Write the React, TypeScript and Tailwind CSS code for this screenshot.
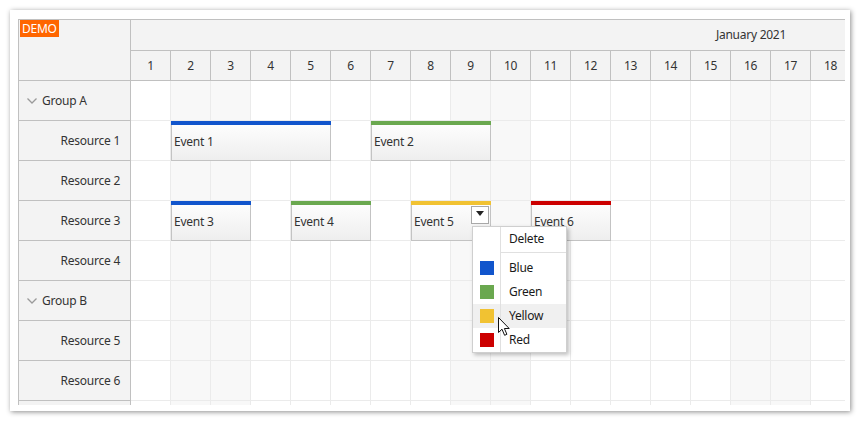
const days = Array.from({ length: 18 }, (_, i) => i + 1);
const weekend = new Set([2, 3, 9, 10, 16, 17]);

type Row = { name: string; group?: boolean };
const rows: Row[] = [
  { name: "Group A", group: true },
  { name: "Resource 1" },
  { name: "Resource 2" },
  { name: "Resource 3" },
  { name: "Resource 4" },
  { name: "Group B", group: true },
  { name: "Resource 5" },
  { name: "Resource 6" },
  { name: "" },
];

type Ev = { text: string; row: string; start: number; span: number; color: string; active?: boolean };
const events: Ev[] = [
  { text: "Event 1", row: "Resource 1", start: 2, span: 4, color: "#1155cc" },
  { text: "Event 2", row: "Resource 1", start: 7, span: 3, color: "#6aa84f" },
  { text: "Event 3", row: "Resource 3", start: 2, span: 2, color: "#1155cc" },
  { text: "Event 4", row: "Resource 3", start: 5, span: 2, color: "#6aa84f" },
  { text: "Event 5", row: "Resource 3", start: 8, span: 2, color: "#f1c232", active: true },
  { text: "Event 6", row: "Resource 3", start: 11, span: 2, color: "#cc0000" },
];

const colors = [
  { name: "Blue", color: "#1155cc" },
  { name: "Green", color: "#6aa84f" },
  { name: "Yellow", color: "#f1c232", hover: true },
  { name: "Red", color: "#cc0000" },
];

function Chevron() {
  return (
    <svg width="10" height="6" viewBox="0 0 10 6" className="shrink-0">
      <polyline points="0.5,0.5 5,5 9.5,0.5" fill="none" stroke="#9a9a9a" strokeWidth="1.3" />
    </svg>
  );
}

function EventBox({ ev }: { ev: Ev }) {
  return (
    <div
      className="absolute top-0 h-[40px] flex flex-col border-x border-b border-[#c3c3c3] bg-gradient-to-b from-white to-[#eeeeee]"
      style={{ left: (ev.start - 1) * 40, width: ev.span * 40 }}
    >
      <div className="h-[4px] -mx-px shrink-0" style={{ background: ev.color }} />
      <div className="flex-1 flex items-center pl-[2px] pb-[1px] text-[#333]">{ev.text}</div>
      {ev.active && (
        <div className="absolute right-[1px] top-[5px] w-[18px] h-[18px] bg-white border border-[#a9a9a9] flex justify-center pt-[4px]">
          <div className="w-0 h-0 border-l-[4px] border-r-[4px] border-t-[5px] border-l-transparent border-r-transparent border-t-[#222]" />
        </div>
      )}
    </div>
  );
}

function Menu() {
  return (
    <div className="absolute left-[453px] top-[206px] w-[95px] bg-white border border-[#cfcfcf] shadow-[2px_2px_4px_rgba(0,0,0,0.25)] text-[#1a1a1a]">
      <div className="flex h-[24px]">
        <div className="w-[28px] border-r border-[#e0e0e0]" />
        <div className="flex-1 flex items-center pl-[8px]">Delete</div>
      </div>
      <div className="flex h-[5px]">
        <div className="w-[28px] border-r border-[#e0e0e0]" />
        <div className="flex-1 mt-[1px] border-t border-[#e0e0e0]" />
      </div>
      {colors.map((c) => (
        <div key={c.name} className={`flex h-[24px] ${c.hover ? "bg-[#f0f0f0]" : ""}`}>
          <div className="w-[28px] border-r border-[#e0e0e0] flex items-center justify-center">
            <div className="w-[14px] h-[14px]" style={{ background: c.color }} />
          </div>
          <div className="flex-1 flex items-center pl-[8px]">{c.name}</div>
        </div>
      ))}
    </div>
  );
}

function Cursor() {
  return (
    <svg className="absolute left-[479px] top-[297px]" width="13" height="20" viewBox="0 0 13 20">
      <path
        d="M0.5 0.5 L0.5 15.5 L4 12.2 L6.6 18.3 L8.9 17.3 L6.4 11.5 L11.2 11.5 Z"
        fill="white"
        stroke="#111"
        strokeWidth="1"
        strokeLinejoin="round"
      />
    </svg>
  );
}

export default function App() {
  return (
    <div className="w-[860px] h-[421px] bg-white p-[10px] font-['Noto_Sans',sans-serif] text-[12px] tracking-[-0.25px] leading-none text-[#333]">
      <div className="w-[840px] h-[401px] bg-white shadow-[1px_1px_5px_rgba(0,0,0,0.45)] pl-[8px] pt-[9px]">
        <div className="relative w-[827px] h-[386px] overflow-hidden border-l border-t border-[#c0c0c0] flex">
          {/* row headers */}
          <div className="w-[112px] shrink-0 flex flex-col bg-[#f3f3f3] border-r border-[#c0c0c0]">
            <div className="h-[61px] shrink-0 border-b border-[#c0c0c0] pl-px">
              <span className="inline-block bg-[#ff6600] text-white px-[2px] h-[17px] leading-[17px]">DEMO</span>
            </div>
            {rows.map((r, i) => (
              <div key={i} className="h-[40px] shrink-0 border-b border-[#c0c0c0] flex items-center pt-[1px]">
                {r.group ? (
                  <div className="flex items-center pl-[8px] gap-[5px]">
                    <Chevron />
                    <span>{r.name}</span>
                  </div>
                ) : (
                  <span className="ml-auto pr-[10px]">{r.name}</span>
                )}
              </div>
            ))}
          </div>

          {/* timeline */}
          <div className="flex-1 flex flex-col min-w-0">
            <div className="h-[31px] shrink-0 w-[1240px] bg-[#f3f3f3] border-b border-[#c0c0c0] flex items-center justify-center">
              January 2021
            </div>
            <div className="h-[30px] shrink-0 flex bg-[#f3f3f3] border-b border-[#c0c0c0]">
              {days.map((d) => (
                <div key={d} className="w-[40px] shrink-0 border-r border-[#c0c0c0] flex items-center justify-center">
                  {d}
                </div>
              ))}
            </div>
            {rows.map((r, i) => (
              <div key={i} className="relative h-[40px] shrink-0 flex">
                {days.map((d) => (
                  <div
                    key={d}
                    className={`w-[40px] h-[40px] shrink-0 border-r border-b border-[#ebebeb] ${weekend.has(d) ? "bg-[#f8f8f8]" : "bg-white"}`}
                  />
                ))}
                {events
                  .filter((e) => r.name !== "" && e.row === r.name)
                  .map((e) => (
                    <EventBox key={e.text} ev={e} />
                  ))}
              </div>
            ))}
          </div>
          <Menu />
          <Cursor />
        </div>
      </div>
    </div>
  );
}
